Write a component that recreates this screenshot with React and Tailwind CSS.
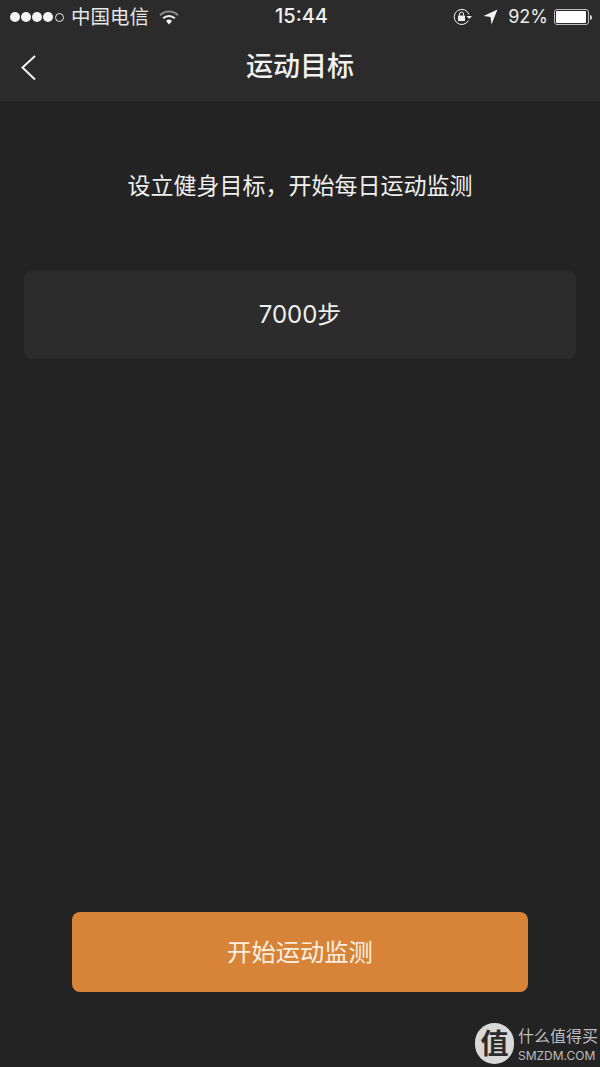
const font = "font-['Inter','Noto_Sans_CJK_SC',sans-serif]";

const SignalDots = () => (
  <div className="flex items-center gap-[1px] w-[54px]">
    {[0, 1, 2, 3].map((i) => (
      <div key={i} className="w-[10px] h-[10px] rounded-full bg-[#f4f4f4]" />
    ))}
    <div className="w-[9px] h-[9px] rounded-full border border-[#e8e8e8] ml-[1px]" />
  </div>
);

const Wifi = () => (
  <svg width="20" height="15" viewBox="0 0 20 15" fill="none">
    <path d="M1 5.2 A13 13 0 0 1 19 5.2" stroke="#8c8c8c" strokeWidth="2" />
    <path d="M4.2 8.2 A8.4 8.4 0 0 1 15.8 8.2" stroke="#f2f2f2" strokeWidth="2" />
    <path d="M7 11 L10 14.5 L13 11 A4.4 4.4 0 0 0 7 11 Z" fill="#f2f2f2" />
  </svg>
);

const RotationLock = () => (
  <svg width="20" height="18" viewBox="0 0 20 18" fill="none">
    <path d="M15.5 12.5 A7.6 7.6 0 1 1 16 6.5" stroke="#f0f0f0" strokeWidth="1" />
    <path d="M13.5 8 L19 8 L16.2 11 Z" fill="#f0f0f0" />
    <rect x="5" y="7.5" width="7" height="5.5" rx="0.5" fill="#f0f0f0" />
    <path d="M6.5 7.5 V6 A2 2 0 0 1 10.5 6 V7.5" stroke="#f0f0f0" strokeWidth="1" />
  </svg>
);

const LocationArrow = () => (
  <svg width="15" height="16" viewBox="0 0 15 16">
    <path d="M14.5 0.5 L0.5 7 L7.5 8 L8.5 15.5 Z" fill="#f4f4f4" />
  </svg>
);

const Battery = () => (
  <div className="flex items-center">
    <div className="w-[35px] h-[16px] rounded-[3px] border border-[#bdbdbd] p-[1px]">
      <div className="w-[30px] h-full rounded-[1px] bg-white" />
    </div>
    <div className="w-[2px] h-[5px] rounded-r-sm bg-[#d0d0d0] ml-[1px]" />
  </div>
);

const StatusBar = () => (
  <div className="relative h-[34px] flex items-center justify-between pl-[10px] pr-[8px]">
    <div className="flex items-center">
      <SignalDots />
      <span className="ml-[7px] text-[19.5px] leading-[24px] text-[#e6e6e6]">中国电信</span>
      <div className="ml-[10px]">
        <Wifi />
      </div>
    </div>
    <span className="absolute left-[275px] top-[4px] text-[20px] leading-[25px] font-medium text-[#f0f0f0]">15:44</span>
    <div className="flex items-center">
      <RotationLock />
      <div className="ml-[10px]">
        <LocationArrow />
      </div>
      <span className="ml-[10px] text-[18px] leading-[24px] text-[#ececec]">92%</span>
      <div className="ml-[6px]">
        <Battery />
      </div>
    </div>
  </div>
);

const NavBar = () => (
  <div className="relative h-[67px] flex items-center justify-center border-b border-[#2d2d2d]">
    <svg className="absolute left-[20px] top-[20px]" width="17" height="27" viewBox="0 0 17 27" fill="none">
      <path d="M15 2 L2.5 13.5 L15 25.5" stroke="#f2f2f2" strokeWidth="2" />
    </svg>
    <h1 className="text-[27px] leading-[36px] font-medium text-[#f2f2f2]">运动目标</h1>
  </div>
);

const Watermark = () => (
  <div className="absolute left-[475px] top-[1023px] flex items-center">
    <div className="w-[39px] h-[41px] rounded-full bg-[#d8d8d8] flex items-center justify-center">
      <span className="text-[28px] leading-none font-bold text-[#2b2b2b]">值</span>
    </div>
    <div className="ml-[4px] flex flex-col">
      <span className="text-[16px] leading-[22px] text-[#bdbdbd] whitespace-nowrap">什么值得买</span>
      <span className="mt-[2px] text-[12px] leading-[14px] text-[#bdbdbd] whitespace-nowrap">SMZDM.COM</span>
    </div>
  </div>
);

export default function App() {
  return (
    <div className={`relative w-[600px] h-[1067px] bg-[#232323] overflow-hidden flex flex-col ${font}`}>
      <div className="bg-[#2b2b2b]">
        <StatusBar />
        <NavBar />
      </div>

      <p className="mt-[69px] text-center text-[23px] leading-[32px] text-[#f0f0f0]">设立健身目标，开始每日运动监测</p>

      <div className="mt-[69px] mx-[24px] h-[88px] rounded-[8px] bg-[#2c2c2c] flex items-center justify-center text-[24px] text-[#efefef]">
        7000步
      </div>

      <div className="mt-auto mb-[75px] mx-[72px] h-[80px] rounded-[8px] bg-[#d78439] pt-[1px] flex items-center justify-center text-[24.3px] text-[#fbeee0]">
        开始运动监测
      </div>

      <Watermark />
    </div>
  );
}
